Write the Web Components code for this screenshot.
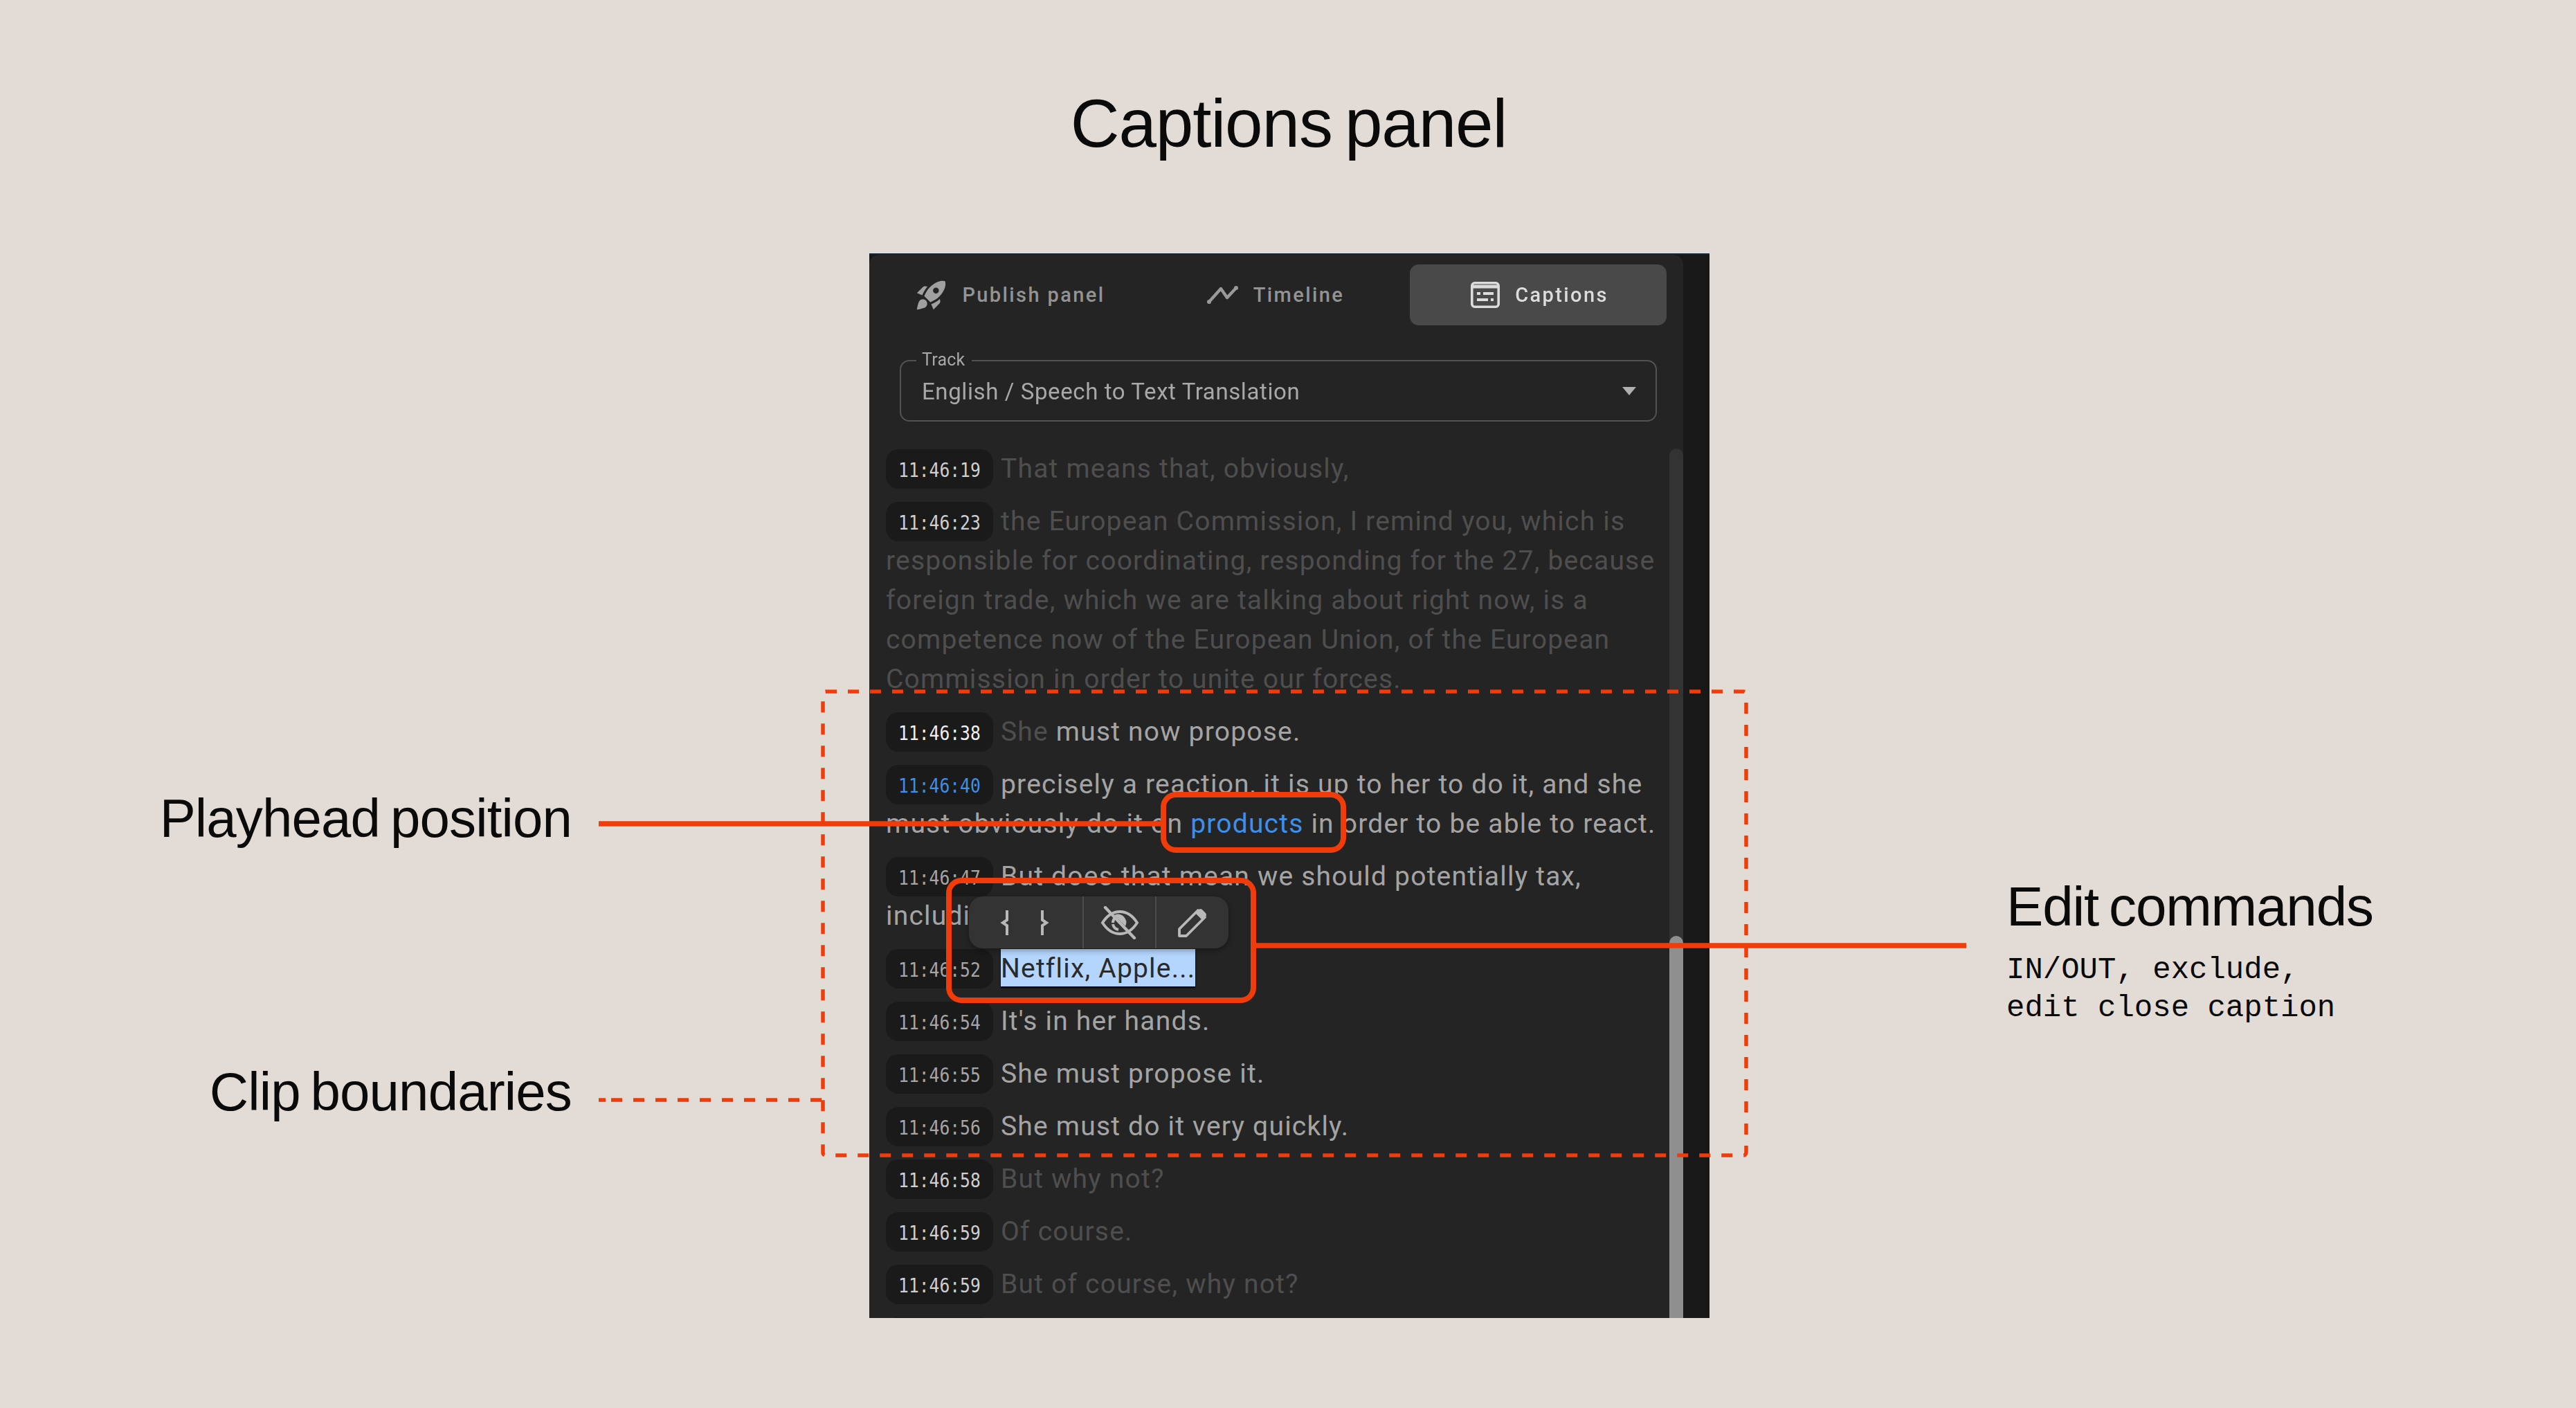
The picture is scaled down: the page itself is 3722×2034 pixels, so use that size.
<!doctype html>
<html lang="en"><head><meta charset="utf-8"><title>Captions panel</title>
<style>html,body{margin:0;padding:0;background:#e3dcd6}</style></head>
<body>
<captions-slide>
  <slide-title slot="title">Captions panel</slide-title>
  <side-label slot="left" style="--top:771px">Playhead position</side-label>
  <side-label slot="left" style="--top:305px">Clip boundaries</side-label>
  <captions-panel slot="panel">
    <tab-bar slot="tabs">
      <tab-item icon="rocket">Publish panel</tab-item>
      <tab-item icon="chart">Timeline</tab-item>
      <tab-item icon="captions" active>Captions</tab-item>
    </tab-bar>
    <track-select slot="select" label="Track">English / Speech to Text Translation</track-select>
    <caption-list slot="list">
      <caption-row time="11:46:19" tone="bright"><dim-text>That means that, obviously,</dim-text></caption-row>
      <caption-row time="11:46:23" tone="bright"><dim-text>the European Commission, I remind you, which is responsible for coordinating, responding for the 27, because foreign trade, which we are talking about right now, is a competence now of the European Union, of the European Commission in order to unite our forces.</dim-text></caption-row>
      <caption-row time="11:46:38" tone="brightest"><dim-text>She</dim-text> must now propose.</caption-row>
      <caption-row time="11:46:40" tone="live">precisely a reaction, it is up to her to do it, and she must obviously do it on <live-word>products</live-word> in order to be able to react.</caption-row>
      <caption-row time="11:46:47">But does that mean we should potentially tax, including</caption-row>
      <caption-row time="11:46:52"><selected-text>Netflix, Apple...</selected-text></caption-row>
      <caption-row time="11:46:54">It's in her hands.</caption-row>
      <caption-row time="11:46:55">She must propose it.</caption-row>
      <caption-row time="11:46:56">She must do it very quickly.</caption-row>
      <caption-row time="11:46:58" tone="bright"><dim-text>But why not?</dim-text></caption-row>
      <caption-row time="11:46:59" tone="bright"><dim-text>Of course.</dim-text></caption-row>
      <caption-row time="11:46:59" tone="bright"><dim-text>But of course, why not?</dim-text></caption-row>
      <caption-row time=""></caption-row>
      <edit-toolbar></edit-toolbar>
    </caption-list>
  </captions-panel>
  <note-block slot="right" heading="Edit commands">IN/OUT, exclude,<br>edit close caption</note-block>
  <annotation-layer slot="overlay"></annotation-layer>
</captions-slide>
<script>
function el(name, html){
  const t=document.createElement('template');t.innerHTML=html;
  customElements.define(name,class extends HTMLElement{
    constructor(){super();this.attachShadow({mode:'open'}).appendChild(t.content.cloneNode(true));}
  });
}
const SANS='"Liberation Sans",Arial,sans-serif';
const ROBOTO='Roboto,"Liberation Sans",sans-serif';

el('captions-slide',`<style>
:host{display:block;position:relative;width:3722px;height:2034px;overflow:hidden;background:#e3dcd6}
.title{height:366px;display:flex;justify-content:center;padding-left:2px;box-sizing:border-box}
.stage{display:grid;grid-template-columns:823px 1214px 1fr;column-gap:433px;height:1538px}
.left{display:flex;flex-direction:column;align-items:flex-end}
</style>
<div class="title"><slot name="title"></slot></div>
<div class="stage"><div class="left"><slot name="left"></slot></div><slot name="panel"></slot><div><slot name="right"></slot></div></div>
<slot name="overlay"></slot>`);

el('slide-title',`<style>
:host{display:block;font:400 98px/1 ${SANS};letter-spacing:-1.1px;word-spacing:-8px;color:#0a0a0a;padding-top:129px}
</style><slot></slot>`);

el('side-label',`<style>
:host{display:block;font:400 78px/90px ${SANS};letter-spacing:-.85px;word-spacing:-6px;color:#0a0a0a;margin-top:var(--top);margin-right:-3px;white-space:nowrap}
</style><slot></slot>`);

el('note-block',`<style>
:host{display:block;padding-top:899px;color:#0a0a0a;margin-left:-4px}
h2{margin:0;font:400 80px/90px ${SANS};letter-spacing:-1.2px;word-spacing:-6px;white-space:nowrap}
p{margin:19px 0 0;font:400 44px/54.5px "Liberation Mono",monospace;white-space:nowrap}
</style><h2 id="h"></h2><p><slot></slot></p>`);
document.querySelectorAll('note-block').forEach(n=>n.shadowRoot.getElementById('h').textContent=n.getAttribute('heading'));

el('captions-panel',`<style>
:host{display:flex;box-sizing:border-box;width:1214px;height:1538px;background:#181818;border-top:2px solid #0d2747;overflow:hidden}
.inner{width:1176px;background:#242424;border-radius:14px 14px 0 0;display:flex;flex-direction:column;min-height:0;filter:blur(.7px)}
.tabs{padding:14px 24px 0 19px}
.select{padding:39px 38px 0 44px}
.body{flex:1;min-height:0;display:flex;margin-top:39px;overflow:hidden}
.list{flex:1;min-width:0;padding:1px 0 0 24px}
.bar{width:20px;flex:none;background:#333;border-radius:10px 10px 0 0;display:flex;flex-direction:column;justify-content:flex-end}
.thumb{height:552px;background:#8f8f8f;border-radius:10px 10px 0 0}
</style>
<div class="inner">
 <div class="tabs"><slot name="tabs"></slot></div>
 <div class="select"><slot name="select"></slot></div>
 <div class="body"><div class="list"><slot name="list"></slot></div><div class="bar"><div class="thumb"></div></div></div>
</div>`);

el('tab-bar',`<style>:host{display:grid;grid-template-columns:repeat(3,371px);column-gap:10px}</style><slot></slot>`);

const ICONS={
 rocket:`<svg width="44" height="44" viewBox="1.6 1.6 20.8 20.8" fill="#a0a0a0"><path d="M9.19 6.35c-2.04 2.29-3.44 5.58-3.57 5.89L2 10.69l4.05-4.05c.47-.47 1.15-.68 1.81-.55l1.33.26zM11.17 17s3.74-1.55 5.89-3.7c5.4-5.4 4.5-9.62 4.21-10.57-.95-.3-5.17-1.19-10.57 4.21C8.55 9.09 7 12.83 7 12.83L11.17 17zm6.48-2.19c-2.29 2.04-5.58 3.44-5.89 3.57L13.31 22l4.05-4.05c.47-.47.68-1.15.55-1.81l-.26-1.33zM9 18c0 .83-.34 1.58-.88 2.12C6.94 21.3 2 22 2 22s.7-4.94 1.88-6.12C4.42 15.34 5.17 15 6 15c1.66 0 3 1.34 3 3zm4-9c0-1.1.9-2 2-2s2 .9 2 2-.9 2-2 2-2-.9-2-2z"/></svg>`,
 chart:`<svg width="48" height="28" viewBox="0 0 48 28" fill="none" stroke="#9a9a9a" stroke-width="4.4" stroke-linejoin="round" stroke-linecap="round"><path d="M6 24 L23 5 L32 18 L45 4"/><circle cx="6" cy="24" r="3" fill="#9a9a9a" stroke="none"/><circle cx="45" cy="4" r="3" fill="#9a9a9a" stroke="none"/></svg>`,
 captions:`<svg width="42" height="38" viewBox="0 0 42 38" fill="none" stroke="#dcdcdc" stroke-width="3.6"><rect x="1.8" y="1.8" width="38.4" height="34.4" rx="4"/><path d="M2 7h38" stroke-width="5"/><path d="M9 17h5M18 17h15M9 26h16M29 26h4" stroke-width="4"/></svg>`
};
el('tab-item',`<style>
:host{display:flex;align-items:center;justify-content:center;box-sizing:border-box;height:88px;border-radius:13px;font:500 29px/1 ${ROBOTO};letter-spacing:2.4px;color:#939393;gap:22px;white-space:nowrap}
:host([active]){background:#494949;color:#dcdcdc;padding-left:4px}
#i{display:flex}
</style><span id="i"></span><span><slot></slot></span>`);
document.querySelectorAll('tab-item').forEach(t=>t.shadowRoot.getElementById('i').innerHTML=ICONS[t.getAttribute('icon')]);

el('track-select',`<style>
:host{display:block;color:#a8a8a8}
fieldset{margin:0;height:100px;box-sizing:border-box;padding:0 28px 0 30px;border:2.4px solid #525252;border-radius:14px}
legend{font:400 25px/26px ${ROBOTO};padding:0 10px 0 8px;margin-left:-8px;color:#a8a8a8;letter-spacing:.2px}
legend span{display:block;margin-top:-2px;height:26px}
.v{font:400 33px/1 ${ROBOTO};letter-spacing:.6px}
.row{display:flex;align-items:center;justify-content:space-between;height:72px;margin-top:-4px}
</style><fieldset><legend><span id="l"></span></legend><div class="row"><span class="v"><slot></slot></span><svg width="20" height="12" viewBox="0 0 20 12" fill="#b0b0b0"><path d="M0 0h20L10 12z"/></svg></div></fieldset>`);
document.querySelectorAll('track-select').forEach(s=>s.shadowRoot.getElementById('l').textContent=s.getAttribute('label'));

el('caption-list',`<style>:host{display:block;position:relative;width:1130px}</style><slot></slot>`);

el('caption-row',`<style>
:host{display:block;font:400 39px/57px ${ROBOTO};letter-spacing:1.2px;color:#a4a4a4;margin-bottom:19px}
.t{display:inline-flex;justify-content:center;vertical-align:top;width:155px;height:57px;margin-right:11px;border-radius:18px;background:#1a1a1a;color:var(--tc,#a6a6a6);font:400 28px/61px "DejaVu Sans Mono",monospace;letter-spacing:0}
.t span{flex:none;display:block;transform:scaleX(.88);white-space:nowrap}
:host([tone=bright]){--tc:#cfcfcf}
:host([tone=brightest]){--tc:#f0f0f0}
:host([tone=live]){--tc:#3f8fe8}
</style><span class="t"><span id="t"></span></span><slot></slot>`);
document.querySelectorAll('caption-row').forEach(r=>r.shadowRoot.getElementById('t').textContent=r.getAttribute('time'));

el('dim-text',`<style>:host{color:#4e4e4e}</style><slot></slot>`);
el('live-word',`<style>:host{color:#3f8fe8}</style><slot></slot>`);
el('selected-text',`<style>:host{display:inline-block;vertical-align:top;background:#b4d5fe;color:#2a2a2a;height:54px;box-shadow:0 2px 2px #000}</style><slot></slot>`);

el('edit-toolbar',`<style>
:host{position:absolute;left:120px;top:646px;width:375px;height:75px;background:#333;border-radius:20px;display:grid;grid-template-columns:164px 105px 106px;box-shadow:0 3px 8px rgba(0,0,0,.35)}
div{display:flex;align-items:center;justify-content:center;border-left:2.4px solid #4c4c4c}
.b{border-left:0;gap:43px;padding-right:4px}
</style>
<div class="b">
<svg width="14" height="38" viewBox="0 0 14 38" fill="none" stroke="#b8b8b8" stroke-width="4"><path d="M10 1v14l-6 4 6 4v14"/></svg>
<svg width="14" height="38" viewBox="0 0 14 38" fill="none" stroke="#b8b8b8" stroke-width="4"><path d="M4 1v14l6 4-6 4v14"/></svg>
</div>
<div><svg width="56" height="48" viewBox="0 0 56 48" fill="none" stroke="#b8b8b8" stroke-width="4"><path d="M3 24C10 13 19 8 28 8s18 5 25 16c-7 11-16 16-25 16S10 35 3 24z"/><path d="M20 14l16 16a12 12 0 0 0-16-16z" fill="#b8b8b8" stroke="none" transform="translate(0 -1)"/><path d="M18 24a10 10 0 0 1 3-7M26 34a10 10 0 0 1-8-8"/><path d="M7 2l42 44" stroke-width="4.4" stroke-linecap="round"/></svg></div>
<div><svg width="44" height="44" viewBox="0 0 44 44" fill="none" stroke="#b8b8b8" stroke-width="3.8" stroke-linejoin="round"><path d="M3 31L30 4l10 10-27 27H3z"/><path d="M26 8l5-5q3-2 5 0l5 5q2 3 0 5l-5 5z" fill="#b8b8b8" stroke="none"/></svg></div>`);

el('annotation-layer',`<style>:host{position:absolute;inset:0;pointer-events:none}svg{display:block}</style>
<svg width="3722" height="2034" fill="none" stroke="#f03c0a">
<rect x="1189" y="999" width="1334" height="670" rx="4" stroke-width="5.5" stroke-dasharray="16 16"/>
<path d="M865 1589H1189" stroke-width="5.5" stroke-dasharray="10 8 16 16 16 16 16 16 16 16 16 16 16 16 16 16 16 16 16 16 16 16 16 16"/>
<path d="M865 1190H1677" stroke-width="7.5"/>
<path d="M1815 1366H2841" stroke-width="7.5"/>
<rect x="1681" y="1148" width="260" height="80" rx="18" stroke-width="8"/>
<rect x="1371" y="1272" width="440" height="173" rx="18" stroke-width="8"/>
</svg>`);
</script>
</body></html>
